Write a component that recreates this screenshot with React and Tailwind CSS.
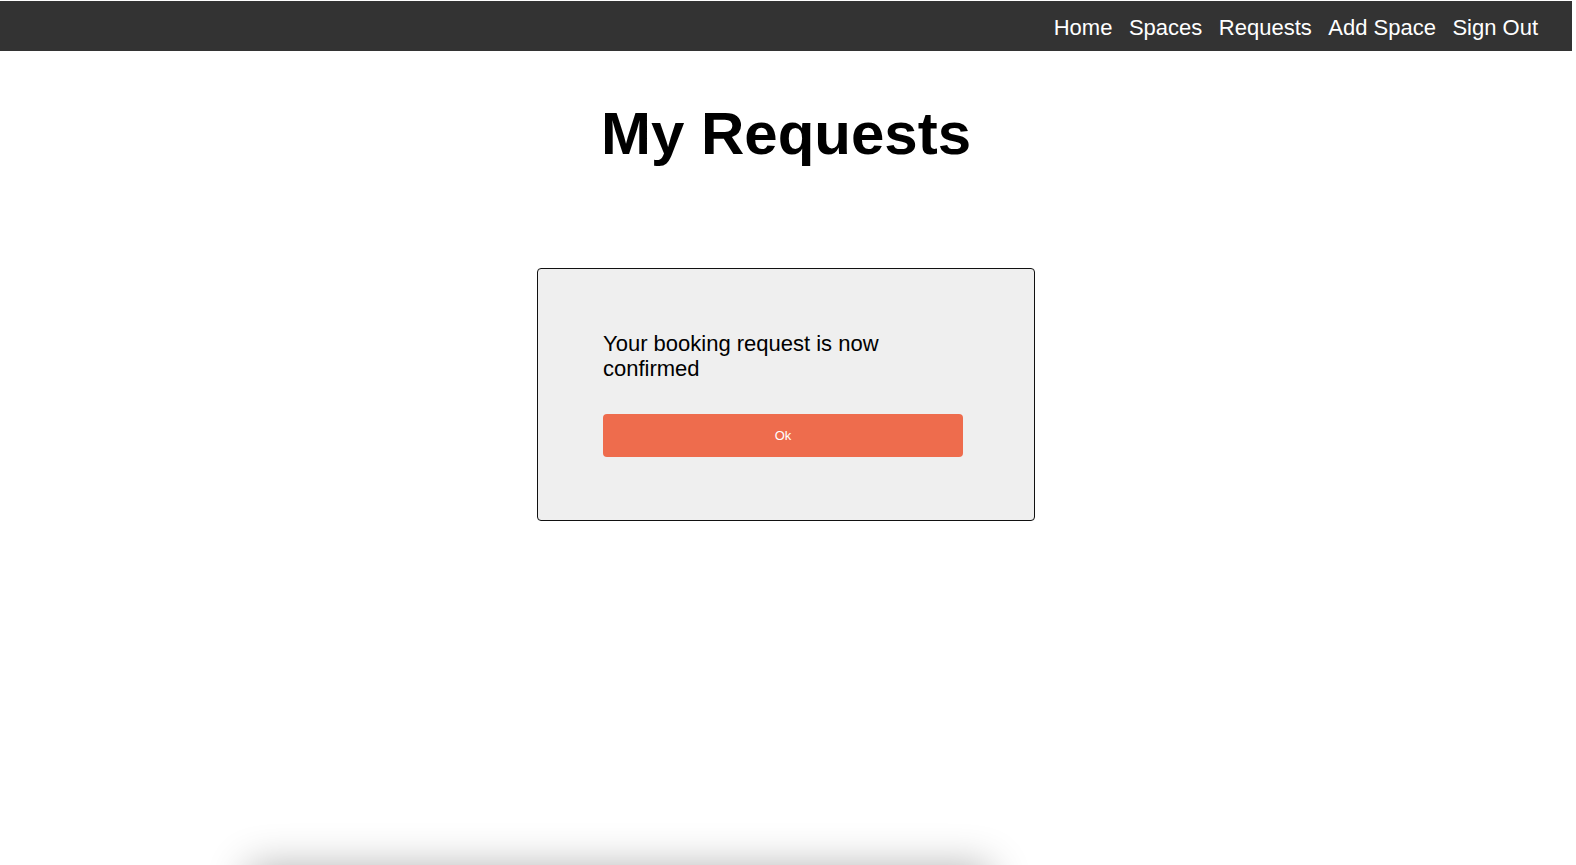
import React from 'react';

const links = ['Home', 'Spaces', 'Requests', 'Add Space', 'Sign Out'];

export default function App() {
  return (
    <div className="w-[1572px] min-h-[865px] bg-white pt-px font-['Liberation_Sans',Arial,sans-serif] text-black">
      {/* Navbar */}
      <nav className="h-[50px] bg-[#333333] flex items-center justify-end pr-[34px] pt-[5px]">
        <ul className="flex items-center gap-[16.5px]">
          {links.map(link => (
            <li key={link}>
              <a href="#" className="text-white text-[22px] leading-[25px]">{link}</a>
            </li>
          ))}
        </ul>
      </nav>

      {/* Page title */}
      <h1 className="mt-[53px] text-center text-[60px] leading-[60px] font-bold">My Requests</h1>

      {/* Confirmation dialog */}
      <div className="mx-auto mt-[104px] w-[498px] bg-[#efefef] border border-[#111] rounded-[4px] pl-[65px] pt-[62px] pb-[63px]">
        <p className="w-[360px] text-[22px] leading-[25px]">Your booking request is now confirmed</p>
        <button className="mt-[33px] w-[360px] h-[43px] bg-[#ee6c4d] rounded-[4px] text-white text-[13px]">
          Ok
        </button>
      </div>

      {/* Card just below the fold */}
      <div className="mt-[345px] ml-[248px] w-[742px] h-[200px] bg-white rounded-[6px] shadow-[0_0_40px_rgba(0,0,0,0.3)]" />
    </div>
  );
}
